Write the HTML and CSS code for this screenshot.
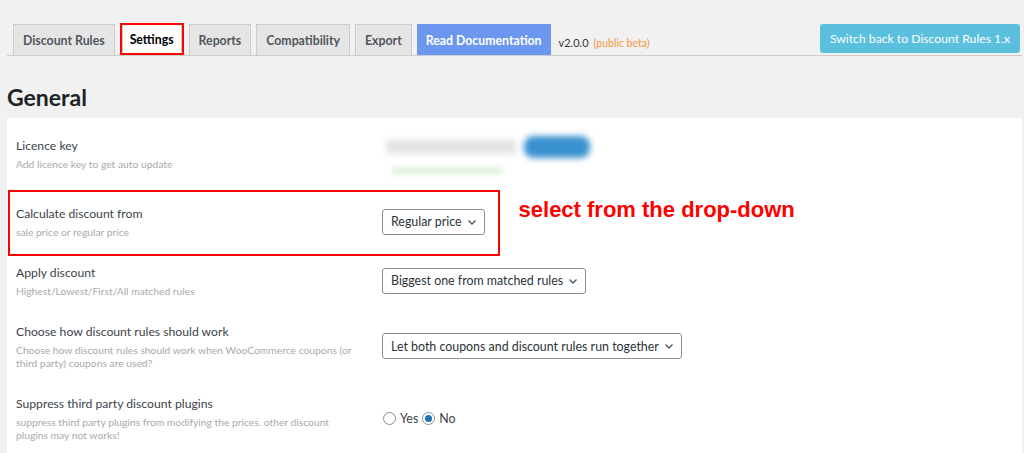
FILE: index.html
```html
<!DOCTYPE html>
<html lang="en">
<head>
    <meta charset="UTF-8">
    <meta name="viewport" content="width=device-width, initial-scale=1.0">
    <title>Discount Rules - Settings</title>
    <link rel="stylesheet" href="styles.css">
</head>
<body>
    <div class="wrap">
        <!-- Top tabs -->
        <nav class="nav-tabs">
            <a class="tab">Discount Rules</a>
            <a class="tab tab-active">Settings<span class="mark mark-tab"></span></a>
            <a class="tab">Reports</a>
            <a class="tab">Compatibility</a>
            <a class="tab">Export</a>
            <a class="tab tab-docs">Read Documentation</a>
            <span class="version">v2.0.0</span>
            <span class="beta">(public beta)</span>
            <button class="switch-button">Switch back to Discount Rules 1.x</button>
        </nav>

        <h2 class="page-title">General</h2>

        <div class="panel">
            <div class="row row-licence">
                <div class="label">
                    <div class="title">Licence key</div>
                    <div class="desc">Add licence key to get auto update</div>
                </div>
                <div class="control">
                    <div class="licence">
                        <div class="licence-line">
                            <span class="blur-input"></span>
                            <span class="blur-button"></span>
                        </div>
                        <span class="blur-note"></span>
                    </div>
                </div>
            </div>

            <div class="row">
                <span class="mark mark-row"></span>
                <div class="label">
                    <div class="title">Calculate discount from</div>
                    <div class="desc">sale price or regular price</div>
                </div>
                <div class="control">
                    <div class="select">Regular price
                        <svg class="chevron" viewBox="0 0 10 10"><path d="M1.5 3.5 5 7l3.5-3.5" /></svg>
                    </div>
                    <span class="note">select from the drop-down</span>
                </div>
            </div>

            <div class="row">
                <div class="label">
                    <div class="title">Apply discount</div>
                    <div class="desc">Highest/Lowest/First/All matched rules</div>
                </div>
                <div class="control">
                    <div class="select">Biggest one from matched rules
                        <svg class="chevron" viewBox="0 0 10 10"><path d="M1.5 3.5 5 7l3.5-3.5" /></svg>
                    </div>
                </div>
            </div>

            <div class="row">
                <div class="label">
                    <div class="title">Choose how discount rules should work</div>
                    <div class="desc">Choose how discount rules should work when WooCommerce coupons (or third party) coupons are used?</div>
                </div>
                <div class="control">
                    <div class="select">Let both coupons and discount rules run together
                        <svg class="chevron" viewBox="0 0 10 10"><path d="M1.5 3.5 5 7l3.5-3.5" /></svg>
                    </div>
                </div>
            </div>

            <div class="row">
                <div class="label">
                    <div class="title">Suppress third party discount plugins</div>
                    <div class="desc">suppress third party plugins from modifying the prices. other discount plugins may not works!</div>
                </div>
                <div class="control">
                    <label class="radio"><span class="dot"></span>Yes</label>
                    <label class="radio"><span class="dot dot-on"></span>No</label>
                </div>
            </div>
        </div>
    </div>
</body>
</html>
```

FILE: styles.css
```css
body {
    font-family: 'Lato', sans-serif;
    margin: 0;
    padding: 0;
    background-color: #f1f1f1;
    color: #3c434a;
}

.wrap {
    padding: 0 2px 0 7px;
}

/* Tabs */
.nav-tabs {
    display: flex;
    align-items: flex-end;
    padding: 24px 0 0 6px;
    border-bottom: 1px solid #ccc;
    height: 31px;
}

.tab {
    position: relative;
    display: flex;
    align-items: center;
    height: 30px;
    padding: 0 9px;
    margin-right: 5px;
    background-color: #e5e5e5;
    border: 1px solid #ccc;
    border-bottom: none;
    color: #50575e;
    font-size: 12.3px;
    font-weight: 700;
}

.tab-active {
    background-color: #fff;
    color: #000;
    height: 31px;
    margin: 0 7px 0 2px;
    padding: 0 7px;
}

.tab-docs {
    background-color: #6c97ee;
    border-color: #6c97ee;
    color: #fff;
    padding: 0 8px;
}

.version {
    align-self: center;
    margin: 6px 0 0 3px;
    font-size: 11px;
    color: #333;
}

.beta {
    align-self: center;
    margin: 6px 0 0 5px;
    font-size: 10.5px;
    color: #f7963d;
}

.switch-button {
    margin: 0 2px 2px auto;
    align-self: flex-start;
    height: 29px;
    width: 200px;
    background-color: #5bc0de;
    color: #fff;
    border: none;
    border-radius: 3px;
    font-family: inherit;
    font-size: 12.2px;
    white-space: nowrap;
}

/* Red annotation boxes */
.mark {
    position: absolute;
    border: 2px solid #f00;
    pointer-events: none;
}

.mark-tab {
    left: -3px;
    top: -1px;
    right: -3px;
    bottom: 0;
}

.mark-row {
    left: -8px;
    top: -2px;
    width: 488px;
    height: 62px;
}

.page-title {
    margin: 26px 0 0;
    font-size: 23px;
    font-weight: 700;
    color: #1d2327;
    line-height: 30px;
}

/* Settings panel */
.panel {
    margin-top: 6px;
    background: #fff;
    padding: 0 0 0 9px;
    min-height: 340px;
}

.row {
    position: relative;
    display: flex;
    align-items: center;
    padding: 12px 0;
}

.row-licence {
    align-items: flex-start;
    padding: 18px 0 14px;
}

.label {
    width: 366px;
    flex-shrink: 0;
}

.title {
    font-size: 12.2px;
    line-height: 19px;
    color: #3c434a;
}

.desc {
    margin-top: 3px;
    font-size: 10.3px;
    line-height: 13px;
    color: #a7aaad;
    max-width: 345px;
}

.control {
    display: flex;
    align-items: center;
}

.select {
    display: flex;
    align-items: center;
    height: 24px;
    padding: 0 7px 0 8px;
    border: 1px solid #8c8f94;
    border-radius: 3px;
    font-size: 12.4px;
    color: #2c3338;
    white-space: nowrap;
}

.chevron {
    width: 10px;
    height: 10px;
    margin-left: 5px;
    fill: none;
    stroke: #50575e;
    stroke-width: 1.4;
}

.note {
    margin: -24px 0 0 34px;
    font-family: 'Liberation Sans', Arial, sans-serif;
    font-weight: bold;
    font-size: 22px;
    color: #f00;
}

/* Blurred licence field */
.licence {
    height: 42px;
    filter: blur(3px);
}

.licence-line {
    display: flex;
    align-items: center;
    gap: 8px;
    margin-left: 4px;
}

.blur-input {
    width: 130px;
    height: 14px;
    background: #e3e3e3;
}

.blur-button {
    width: 66px;
    height: 22px;
    border-radius: 9px;
    background: #3a91d0;
}

.blur-note {
    display: block;
    width: 110px;
    height: 5px;
    margin: 10px 0 0 10px;
    background: #d3ead0;
}

.radio {
    display: flex;
    align-items: center;
    font-size: 12.4px;
    color: #3c434a;
    margin-right: 3px;
}

.dot {
    width: 11px;
    height: 11px;
    margin: 0 4px 0 1px;
    border: 1px solid #8c8f94;
    border-radius: 50%;
    box-sizing: content-box;
    position: relative;
}

.dot-on::after {
    content: '';
    position: absolute;
    left: 2px;
    top: 2px;
    width: 7px;
    height: 7px;
    border-radius: 50%;
    background: #2271b1;
}
```
